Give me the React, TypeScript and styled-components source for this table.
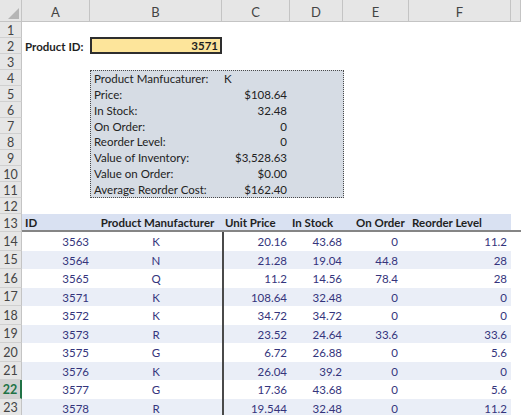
import React from 'react';
import styled, { createGlobalStyle } from 'styled-components';

const GlobalStyle = createGlobalStyle`
  html, body { margin: 0; padding: 0; background: #ffffff; overflow: hidden; }
  body { font-family: Lato, "Liberation Sans", sans-serif; }
  * { box-sizing: border-box; }
`;

const COLS = '68px 132px 68px 53px 66px 102px 1fr';

const Sheet = styled.div`
  display: grid;
  grid-template-columns: 22px ${COLS};
  grid-template-rows: 22px repeat(12, 16px) 18px repeat(10, 18.5px);
  width: 521px;
  height: 415px;
  overflow: hidden;
  font-family: Lato, "Liberation Sans", sans-serif;
  font-size: 11.5px;
  color: #1f1f1f;
`;

const Corner = styled.div`
  grid-row: 1;
  grid-column: 1;
  background: #e6e6e6;
  border-right: 1px solid #c4c4c4;
  border-bottom: 1px solid #c4c4c4;
  display: flex;
  align-items: flex-end;
  justify-content: flex-end;
  padding: 0 2px 2px 0;
`;

const ColHeader = styled.div<{ $col: number }>`
  grid-row: 1;
  grid-column: ${(p) => p.$col};
  background: #e6e6e6;
  border-right: 1px solid #c4c4c4;
  border-bottom: 1px solid #c4c4c4;
  display: flex;
  align-items: center;
  justify-content: center;
  font-size: 13px;
  color: #444444;
  padding-top: 2px;
`;

const RowNum = styled.div<{ $row: number; $active?: boolean }>`
  grid-column: 1;
  grid-row: ${(p) => p.$row + 1};
  background: ${(p) => (p.$active ? '#d2d2d2' : '#e6e6e6')};
  border-right: ${(p) => (p.$active ? '2px solid #217346' : '1px solid #c4c4c4')};
  border-bottom: 1px solid #d0d0d0;
  display: flex;
  align-items: center;
  justify-content: center;
  font-size: 12.5px;
  font-weight: ${(p) => (p.$active ? 700 : 400)};
  color: ${(p) => (p.$active ? '#217346' : '#444444')};
  padding-top: 1px;
`;

const IdLabel = styled.div`
  grid-row: 3;
  grid-column: 2;
  font-weight: 700;
  padding-left: 3px;
  display: flex;
  align-items: center;
  white-space: nowrap;
`;

const IdInput = styled.div`
  grid-row: 3;
  grid-column: 3;
  margin: -1px 0 0 0;
  background: #fde59b;
  border: 2px solid #2e2e2e;
  display: flex;
  align-items: center;
  justify-content: flex-end;
  padding-right: 2px;
  font-weight: 700;
`;

const InfoBox = styled.div`
  grid-row: 5 / 13;
  grid-column: 3 / 6;
  background: #d6dce4;
  border: 1px dotted #4a4a4a;
  display: grid;
  grid-template-columns: 131px 68px 1fr;
  grid-auto-rows: 1fr;
  margin-right: -1px;
`;

const InfoLabel = styled.div`
  padding-left: 3px;
  display: flex;
  align-items: center;
  white-space: nowrap;
  color: #222222;
`;

const InfoValue = styled.div<{ $left?: boolean }>`
  display: flex;
  align-items: center;
  justify-content: ${(p) => (p.$left ? 'flex-start' : 'flex-end')};
  padding: ${(p) => (p.$left ? '0 0 0 2px' : '0 3px 0 0')};
  white-space: nowrap;
  color: #222222;
`;

const TableHead = styled.div`
  grid-row: 14;
  grid-column: 2 / -1;
  display: grid;
  grid-template-columns: ${COLS};
  border-bottom: 2px solid #858585;
`;

const HeadCell = styled.div<{ $pad?: number; $center?: boolean; $blank?: boolean }>`
  background: ${(p) => (p.$blank ? '#ffffff' : '#d9e1f2')};
  font-weight: 700;
  display: flex;
  align-items: center;
  justify-content: ${(p) => (p.$center ? 'center' : 'flex-start')};
  padding-left: ${(p) => p.$pad ?? 3}px;
  white-space: nowrap;
  color: #1f1f1f;
`;

const DataRow = styled.div<{ $row: number; $band: boolean }>`
  grid-row: ${(p) => p.$row + 1};
  grid-column: 2 / -1;
  display: grid;
  grid-template-columns: ${COLS};
  background: ${(p) => (p.$band ? '#eaeef7' : '#ffffff')};
`;

const DataCell = styled.div<{ $align: 'right' | 'center'; $pad?: number; $divider?: boolean }>`
  display: flex;
  align-items: center;
  justify-content: ${(p) => (p.$align === 'center' ? 'center' : 'flex-end')};
  padding-right: ${(p) => p.$pad ?? 0}px;
  padding-top: 1px;
  border-left: ${(p) => (p.$divider ? '2px solid #4a4a4a' : 'none')};
  color: #34347c;
  white-space: nowrap;
`;

const Filler = styled.div`
  background: #ffffff;
`;

const letters = ['A', 'B', 'C', 'D', 'E', 'F', ''];

const info: [string, string, boolean?][] = [
  ['Product Manfucaturer:', 'K', true],
  ['Price:', '$108.64'],
  ['In Stock:', '32.48'],
  ['On Order:', '0'],
  ['Reorder Level:', '0'],
  ['Value of Inventory:', '$3,528.63'],
  ['Value on Order:', '$0.00'],
  ['Average Reorder Cost:', '$162.40'],
];

const rows: string[][] = [
  ['3563', 'K', '20.16', '43.68', '0', '11.2'],
  ['3564', 'N', '21.28', '19.04', '44.8', '28'],
  ['3565', 'Q', '11.2', '14.56', '78.4', '28'],
  ['3571', 'K', '108.64', '32.48', '0', '0'],
  ['3572', 'K', '34.72', '34.72', '0', '0'],
  ['3573', 'R', '23.52', '24.64', '33.6', '33.6'],
  ['3575', 'G', '6.72', '26.88', '0', '5.6'],
  ['3576', 'K', '26.04', '39.2', '0', '0'],
  ['3577', 'G', '17.36', '43.68', '0', '5.6'],
  ['3578', 'R', '19.544', '32.48', '0', '11.2'],
];

const pads = [1, 0, 3, 1, 11, 4];

export default function App() {
  return (
    <>
      <GlobalStyle />
      <Sheet>
        <Corner>
          <svg width="11" height="11" viewBox="0 0 11 11">
            <polygon points="11,0 11,11 0,11" fill="#b5b5b5" />
          </svg>
        </Corner>
        {letters.map((l, i) => (
          <ColHeader key={i} $col={i + 2}>
            {l}
          </ColHeader>
        ))}
        {Array.from({ length: 23 }, (_, i) => (
          <RowNum key={i} $row={i + 1} $active={i + 1 === 22}>
            {i + 1}
          </RowNum>
        ))}
        <IdLabel>Product ID:</IdLabel>
        <IdInput>3571</IdInput>
        <InfoBox>
          {info.map(([label, value, left], i) => (
            <React.Fragment key={i}>
              <InfoLabel>{label}</InfoLabel>
              <InfoValue $left={left}>{value}</InfoValue>
              <div />
            </React.Fragment>
          ))}
        </InfoBox>
        <TableHead>
          <HeadCell>ID</HeadCell>
          <HeadCell $center>Product Manufacturer</HeadCell>
          <HeadCell>Unit Price</HeadCell>
          <HeadCell $pad={2}>In Stock</HeadCell>
          <HeadCell $pad={13}>On Order</HeadCell>
          <HeadCell>Reorder Level</HeadCell>
          <HeadCell $blank />
        </TableHead>
        {rows.map((r, i) => (
          <DataRow key={i} $row={14 + i} $band={i % 2 === 1}>
            {r.map((v, j) => (
              <DataCell key={j} $align={j === 1 ? 'center' : 'right'} $pad={pads[j]} $divider={j === 2}>
                {v}
              </DataCell>
            ))}
            <Filler />
          </DataRow>
        ))}
      </Sheet>
    </>
  );
}
